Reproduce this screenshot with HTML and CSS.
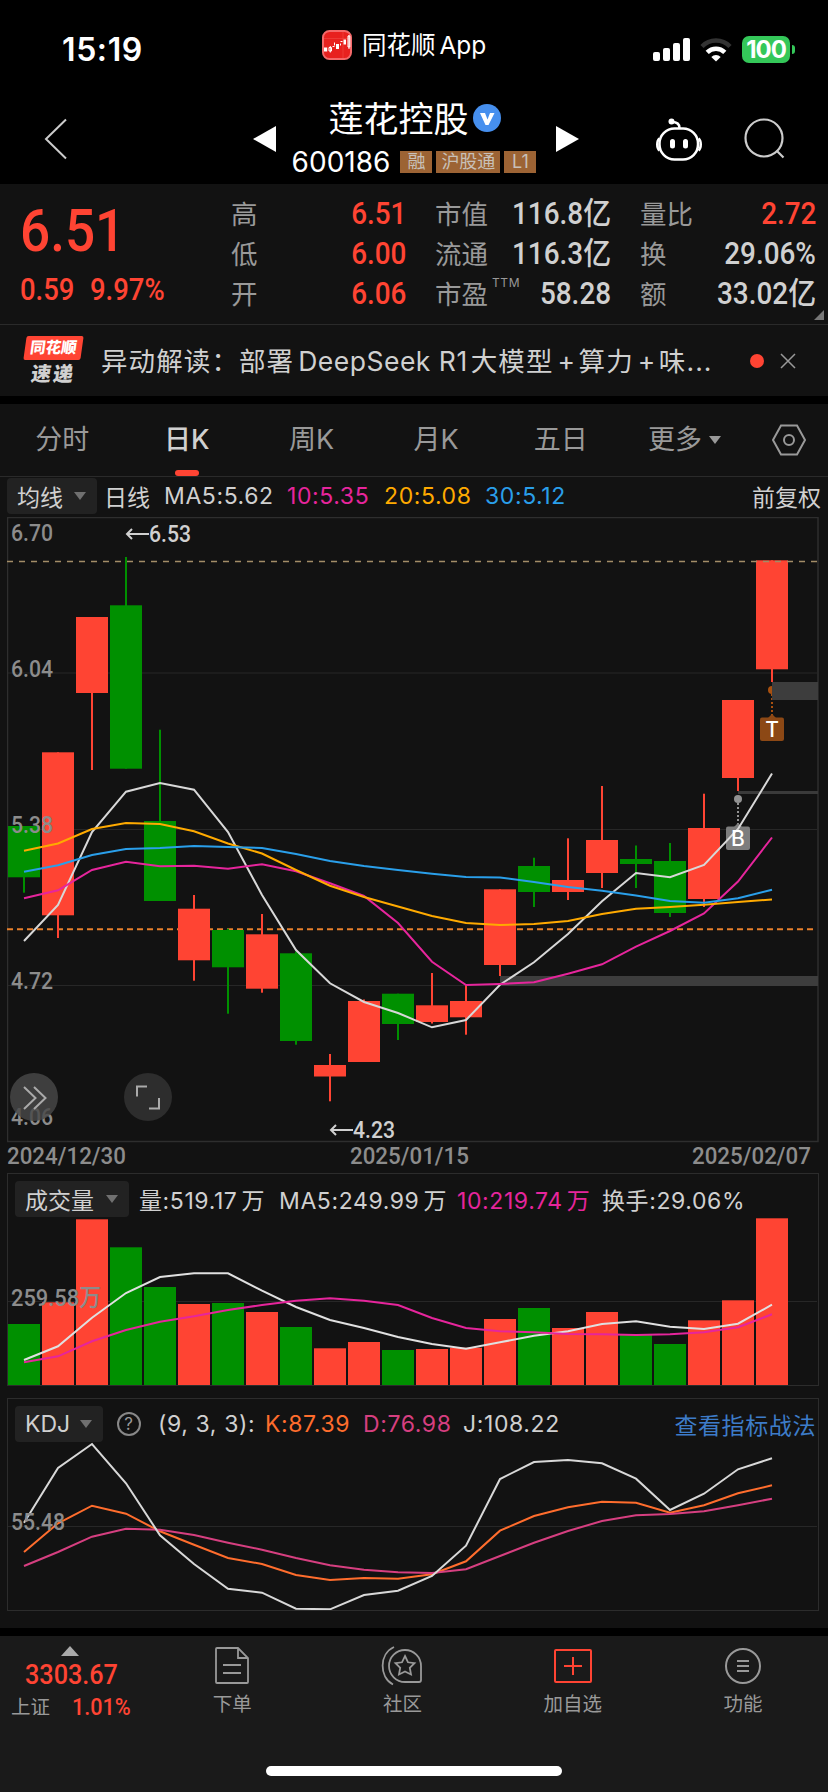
FILE: index.html
```html
<!DOCTYPE html>
<html lang="zh-CN">
<head>
    <meta charset="UTF-8">
    <meta name="viewport" content="width=device-width, initial-scale=1.0">
    <title>莲花控股 600186</title>
    <link rel="stylesheet" href="styles.css">
</head>
<body>
    <div class="status-bar">
        <div class="time">15:19</div>
        <div class="app-name">
            <svg width="30" height="30" viewBox="0 0 30 30">
                <rect x="1" y="1" width="28" height="28" rx="6.5" fill="#e8211f" stroke="#f4696a" stroke-width="2"/>
                <path d="M2 8.500H28M21 2V28" stroke="#f04a45" stroke-width=".6"/>
                <path d="M2 17.500h3.200v4H2zM14 14h3v5h-3zM21.500 9.500h2.500v5h-2.500z" fill="#fff"/>
                <path d="M7 17.500h2.500v3.500H7zM8.300 16v6.500M10.500 16.500h2M12.500 12.500v3M18.500 11.500h2M18.500 13.500v2M26 6h1.800v11H26zM27 5v14" fill="none" stroke="#fff"/>
            </svg>
            <span>同花顺 App</span>
        </div>
        <div class="status-icons">
            <svg width="38" height="24" viewBox="0 0 38 24" fill="#fff">
                <rect x="0" y="14" width="7" height="9" rx="2"/>
                <rect x="10" y="10" width="7" height="13" rx="2"/>
                <rect x="20" y="5" width="7" height="18" rx="2"/>
                <rect x="30" y="0" width="7" height="23" rx="2"/>
            </svg>
            <svg width="32" height="24" viewBox="0 0 32 24" fill="none" stroke-width="4.500">
                <path d="M2 8.500A19.500 19.500 0 0 1 30 8.500" stroke="#333"/>
                <path d="M7.200 14.300A12.500 12.500 0 0 1 24.800 14.300" stroke="#fff"/>
                <path d="M11.300 19A6.800 6.800 0 0 1 20.700 19L16 23.500z" fill="#fff" stroke="none"/>
            </svg>
            <div class="battery">100</div>
            <i class="battery-tip"></i>
        </div>
    </div>

    <div class="header">
        <svg class="back" width="24" height="42" viewBox="0 0 24 42" fill="none" stroke="#ccc" stroke-width="2"><path d="M22 1.500L2 21L22 40.500"/></svg>
        <svg class="prev" width="23" height="26" viewBox="0 0 23 26"><path d="M0 13L23 0V26z" fill="#fff"/></svg>
        <div class="stock">
            <div class="stock-name">
                <span>莲花控股</span>
                <svg width="28" height="28" viewBox="0 0 28 28"><circle cx="14" cy="14" r="14" fill="#468fee"/><path d="M7 9h5l2.500 6.500L17 9h4.500L15.500 21h-3z" fill="#fff"/></svg>
            </div>
            <div class="stock-code">
                <span class="code">600186</span>
                <span class="tag">融</span>
                <span class="tag wide">沪股通</span>
                <span class="tag">L1</span>
            </div>
        </div>
        <svg class="next" width="23" height="26" viewBox="0 0 23 26"><path d="M23 13L0 0V26z" fill="#fff"/></svg>
        <svg class="bot" width="48" height="43" viewBox="0 0 48 43" fill="none" stroke="#fff" stroke-width="2.500">
            <rect x="4.500" y="10.500" width="38.500" height="31" rx="15"/>
            <path d="M4.500 20.500C1.500 23 1.500 30 4.500 32.500M43.500 20.500C46.500 23 46.500 30 43.500 32.500M24.500 10C24.500 6 22 4 17 4"/>
            <circle cx="16.500" cy="3.500" r="3" fill="#fff" stroke="none"/>
            <path d="M17.500 23.500v4.500M30.500 23.500v4.500" stroke-width="5" stroke-linecap="round"/>
        </svg>
        <svg class="search" width="42" height="42" viewBox="0 0 42 42" fill="none" stroke="#ccc" stroke-width="2.200"><circle cx="20" cy="20" r="18.500"/><path d="M32.500 32.500L39.500 39.500"/></svg>
    </div>

    <div class="quote">
        <div class="price">
            <div class="price-now num">6.51</div>
            <div class="price-change"><span class="num">0.59</span><span class="num">9.97%</span></div>
        </div>
        <div class="fields">
            <div><label>高</label><span class="num up">6.51</span></div>
            <div><label>低</label><span class="num up">6.00</span></div>
            <div><label>开</label><span class="num up">6.06</span></div>
        </div>
        <div class="fields">
            <div><label>市值</label><span class="num">116.8亿</span></div>
            <div><label>流通</label><span class="num">116.3亿</span></div>
            <div><label>市盈<sup>TTM</sup></label><span class="num">58.28</span></div>
        </div>
        <div class="fields">
            <div><label>量比</label><span class="num up">2.72</span></div>
            <div><label>换</label><span class="num">29.06%</span></div>
            <div><label>额</label><span class="num">33.02亿</span></div>
        </div>
        <i class="corner"></i>
    </div>

    <div class="news">
        <div class="news-logo">
            <b>同花顺</b>
            <em>速递</em>
        </div>
        <div class="news-text">异动解读：部署<span>DeepSeek R1</span>大模型<span>+</span>算力<span>+</span>味...</div>
        <i class="dot"></i>
        <svg width="16" height="16" viewBox="0 0 16 16" stroke="#999" stroke-width="1.500"><path d="M1 1L15 15M15 1L1 15"/></svg>
    </div>

    <div class="tabs">
        <span>分时</span>
        <span class="active">日K</span>
        <span>周K</span>
        <span>月K</span>
        <span>五日</span>
        <span class="more">更多<i class="arrow"></i></span>
        <svg width="36" height="32" viewBox="0 0 36 32" fill="none" stroke="#999" stroke-width="2"><path d="M10 1.500H26L34 16L26 30.500H10L2 16z"/><circle cx="18" cy="16" r="5"/></svg>
    </div>

    <div class="ma-row">
        <div class="pill">均线<i class="arrow"></i></div>
        <span class="period">日线</span>
        <span>MA5:5.62</span>
        <span class="pink">10:5.35</span>
        <span class="yellow">20:5.08</span>
        <span class="blue">30:5.12</span>
        <span class="adjust">前复权</span>
    </div>

    <svg class="kline" id="kline" width="812" height="626" viewBox="7 517 812 626"></svg>

    <div class="dates"><span class="num">2024/12/30</span><span class="num">2025/01/15</span><span class="num">2025/02/07</span></div>

    <div class="panel">
        <div class="panel-head volume-head">
            <div class="pill">成交量<i class="arrow"></i></div>
            <span>量:519.17<u>万</u></span>
            <span>MA5:249.99<u>万</u></span>
            <span class="pink">10:219.74<u>万</u></span>
            <span>换手:29.06%</span>
        </div>
        <svg id="volume" width="810" height="168" viewBox="8 1217 810 168"></svg>
    </div>

    <div class="panel">
        <div class="panel-head kdj-head">
            <div class="pill">KDJ<i class="arrow"></i></div>
            <i class="help">?</i>
            <span>(9, 3, 3):</span>
            <span class="k">K:87.39</span>
            <span class="d">D:76.98</span>
            <span>J:108.22</span>
            <a class="link">查看指标战法</a>
        </div>
        <svg id="kdj" width="810" height="168" viewBox="8 1442 810 168"></svg>
    </div>

    <div class="footer">
        <div class="index">
            <i class="index-arrow"></i>
            <div class="index-value num">3303.67</div>
            <div class="index-name"><span>上证</span><span class="num">1.01%</span></div>
        </div>
        <div class="nav">
            <svg width="40" height="40" viewBox="0 0 40 40" fill="none" stroke="#999" stroke-width="1.800"><path d="M26 2H5Q4 2 4 3V36Q4 37 5 37H35Q36 37 36 36V12zM26 2V12H36M11 19H29M11 27H29"/></svg>
            <span>下单</span>
        </div>
        <div class="nav">
            <svg width="44" height="40" viewBox="0 0 44 40" fill="none" stroke="#999" stroke-width="1.800"><path d="M14 1C-1 8-1 31 13 38.500M25 4A16 16 0 0 0 25 36H39Q41 36 41 34V20A16 16 0 0 0 25 4z"/><path d="M25 10L28 16.300L34.500 17.200L29.800 21.900L31 28.500L25 25.500L19 28.500L20.200 21.900L15.500 17.200L22 16.300z"/></svg>
            <span>社区</span>
        </div>
        <div class="nav">
            <svg width="40" height="40" viewBox="0 0 40 40" fill="none" stroke="#ff4433" stroke-width="2"><rect x="2" y="4" width="36" height="32" rx="1"/><path d="M11 20H29M20 11V29"/></svg>
            <span>加自选</span>
        </div>
        <div class="nav">
            <svg width="40" height="40" viewBox="0 0 40 40" fill="none" stroke="#999" stroke-width="2"><circle cx="20" cy="20" r="17"/><path d="M14 15H26M14 20H26M14 25H26"/></svg>
            <span>功能</span>
        </div>
        <i class="home-bar"></i>
    </div>

    <script src="chart.js"></script>
</body>
</html>
```

FILE: styles.css
```css
* {
    box-sizing: border-box;
}
body {
    margin: 0;
    width: 828px;
    height: 1792px;
    overflow: hidden;
    background-color: #121212;
    color: #d0d0d0;
    font-family: Inter, 'Noto Sans CJK SC', sans-serif;
}
svg {
    display: block;
    flex: none;
}
i, em {
    font-style: normal;
}
u {
    text-decoration: none;
    margin-left: 4px;
}
.num {
    display: inline-block;
    font-family: Roboto, 'Noto Sans CJK SC', sans-serif;
    font-weight: 500;
    letter-spacing: 0;
    transform: scaleX(0.9);
    transform-origin: right center;
    white-space: nowrap;
}
.up {
    color: #ff4433;
}
.pink {
    color: #e6259c;
}
.yellow {
    color: #ffaa00;
}
.blue {
    color: #2a9fea;
}

/* 状态栏 */
.status-bar {
    display: grid;
    grid-template-columns: 322px 331px 1fr;
    height: 100px;
    background-color: #000;
    color: #fff;
}
.time {
    padding: 30px 0 0 62px;
    font-size: 32px;
    line-height: 39px;
    font-weight: 600;
    letter-spacing: 0.6px;
}
.app-name {
    display: flex;
    align-items: center;
    gap: 10px;
    height: 30px;
    margin-top: 30px;
    font-size: 24.5px;
    white-space: nowrap;
    word-spacing: -3px;
}
.app-name span {
    margin-top: -4px;
}
.status-icons {
    display: flex;
    align-items: center;
    height: 27px;
    margin-top: 36px;
}
.status-icons svg + svg {
    margin: 0 10px 0 9px;
}
.battery {
    width: 48px;
    height: 27px;
    border-radius: 7px;
    background-color: #34c759;
    font-size: 24px;
    line-height: 27px;
    font-weight: 700;
    text-align: center;
    letter-spacing: -1px;
}
.battery-tip {
    width: 3px;
    height: 9px;
    margin-left: 2px;
    border-radius: 0 4px 4px 0;
    background-color: #34c759;
}

/* 标题 */
.header {
    display: flex;
    height: 84px;
    background-color: #000;
}
.back {
    margin: 18px 0 0 44px;
}
.prev {
    margin: 26px 0 0 185px;
}
.stock {
    width: 280px;
    padding-right: 4px;
    text-align: center;
}
.stock-name {
    display: flex;
    justify-content: center;
    align-items: center;
    gap: 4px;
    height: 36px;
    padding-left: 1px;
    color: #fff;
    font-size: 35px;
}
.stock-name span {
    margin-top: -3px;
}
.stock-code {
    display: flex;
    justify-content: center;
    align-items: center;
    gap: 4px;
    height: 52px;
}
.code {
    margin-right: 6px;
    color: #fff;
    font-size: 28px;
}
.tag {
    width: 32px;
    height: 22px;
    background-color: #9c6334;
    color: #c8c0b8;
    font-size: 18px;
    line-height: 21px;
}
.tag.wide {
    width: 64px;
}
.next {
    margin-top: 26px;
}
.bot {
    margin: 18px 0 0 76px;
}
.search {
    margin: 18px 0 0 41px;
}

/* 行情 */
.quote {
    display: grid;
    grid-template-columns: 180px 175px 176px 176px;
    gap: 0 29px;
    position: relative;
    height: 141px;
    padding-left: 22px;
    border-bottom: 1px solid #2a2a2a;
}
.price {
    margin-left: -2px;
    color: #ff4433;
}
.price .num {
    transform-origin: left center;
}
.price-now {
    margin-top: 14px;
    font-size: 59px;
    line-height: 66px;
}
.price-change {
    display: flex;
    gap: 10px;
    margin-top: 8px;
    font-size: 30.5px;
    line-height: 36px;
}
.fields {
    padding-top: 11px;
}
.fields div {
    display: flex;
    justify-content: space-between;
    height: 40px;
    line-height: 38px;
}
.fields label {
    color: #999;
    font-size: 26.5px;
    white-space: nowrap;
}
.fields .num {
    font-size: 31px;
    line-height: 38px;
}
sup {
    margin-left: 4px;
    font-size: 12px;
    line-height: 0;
    letter-spacing: 0.6px;
    vertical-align: 17px;
}
.corner {
    position: absolute;
    right: 4px;
    bottom: 4px;
    border-bottom: 10px solid #777;
    border-left: 10px solid transparent;
}

/* 速递 */
.news {
    display: flex;
    align-items: center;
    height: 79px;
    padding-left: 25px;
    border-bottom: 8px solid #000;
}
.news-logo {
    width: 76px;
}
.news-logo b, .news-logo em {
    display: block;
    width: 57px;
    transform: skewX(-8deg);
    text-align: center;
    font-weight: 900;
}
.news-logo b {
    height: 24px;
    border-radius: 2px;
    background-color: #ff4433;
    color: #fff;
    font-size: 15.5px;
    line-height: 23px;
}
.news-logo em {
    height: 25px;
    font-size: 20px;
    line-height: 28px;
    letter-spacing: 2px;
}
.news-text {
    width: 649px;
    margin-top: -3px;
    font-size: 26.5px;
    letter-spacing: 1.1px;
    white-space: nowrap;
}
.news-text span {
    padding: 0 3px 0 4px;
    letter-spacing: 0.5px;
}
.dot {
    width: 14px;
    height: 14px;
    margin-right: 16px;
    border-radius: 50%;
    background-color: #ff4433;
}

/* 周期切换 */
.tabs {
    display: flex;
    align-items: center;
    height: 73px;
    border-bottom: 1px solid #2a2a2a;
    color: #999;
    font-size: 27px;
}
.tabs span {
    width: 124.6px;
    height: 72px;
    line-height: 72px;
    text-align: center;
}
.tabs .active {
    position: relative;
    color: #d0d0d0;
    font-weight: 500;
}
.tabs .active::after {
    content: '';
    position: absolute;
    left: 50px;
    bottom: 0;
    width: 24px;
    height: 6px;
    border-radius: 3px;
    background-color: #ff4433;
}
.tabs .more {
    width: 148px;
    padding-left: 25px;
    text-align: left;
}
.arrow {
    display: inline-block;
    border-top: 8px solid #707070;
    border-left: 6px solid transparent;
    border-right: 6px solid transparent;
}
.more .arrow {
    margin-left: 7px;
    vertical-align: 5px;
    border-top-color: #999;
}

/* 均线 */
.ma-row {
    display: grid;
    grid-template-columns: 97px 60px 123px 97px 101px 100px 1fr;
    align-items: center;
    height: 40px;
    padding: 0 7px 2px 7px;
    font-size: 23px;
    letter-spacing: 0.6px;
    white-space: nowrap;
}
.period, .adjust {
    letter-spacing: 0;
}
.pill {
    display: flex;
    align-items: center;
    justify-content: space-between;
    width: 90px;
    height: 36px;
    padding: 0 11px 0 10px;
    border-radius: 4px;
    background-color: #222;
    letter-spacing: 0;
}
.adjust {
    text-align: right;
}
.kline {
    margin-left: 7px;
}
.dates {
    display: flex;
    justify-content: space-between;
    height: 30px;
    padding: 0 19px 0 7px;
    color: #8c8c8c;
    font-size: 24px;
    line-height: 27px;
}
.dates .num {
    width: 117px;
    transform: scaleX(0.93);
    transform-origin: left center;
}

/* 副图 */
.panel {
    width: 812px;
    height: 213px;
    margin: 0 0 12px 7px;
    border: 1px solid #2c2c2c;
}
.panel-head {
    display: grid;
    align-items: center;
    height: 43px;
    padding: 7px 2px 0 7px;
    font-size: 23px;
    letter-spacing: 0.6px;
    white-space: nowrap;
}
.volume-head {
    grid-template-columns: 124px 140px 178px 145px 1fr;
}
.kdj-head {
    grid-template-columns: 102px 41px 107px 98px 100px 110px 1fr;
}
.volume-head .pill {
    width: 114px;
}
.kdj-head .pill {
    width: 88px;
}
.help {
    width: 24px;
    height: 24px;
    border: 2px solid #888;
    border-radius: 50%;
    color: #999;
    font-size: 17px;
    line-height: 20px;
    text-align: center;
}
.k {
    color: #ff6d2d;
}
.d {
    color: #d63f80;
}
.link {
    color: #3d7cc9;
    text-align: right;
}

/* 图表 */
.grid {
    stroke: #272727;
    fill: none;
}
.line {
    fill: none;
    stroke-width: 2;
}
.axis {
    fill: #8c8c8c;
    font: 500 24px Roboto, 'Noto Sans CJK SC', sans-serif;
}
.mark {
    fill: #d0d0d0;
    font: 500 24px Roboto, sans-serif;
}
.badge-text {
    fill: #fff;
    font: 500 21px Inter, sans-serif;
    text-anchor: middle;
}

/* 底部 */
.footer {
    display: grid;
    grid-template-columns: 147px repeat(4, 170.3px);
    position: relative;
    height: 164px;
    margin-top: 17px;
    border-top: 8px solid #000;
    background-color: #1a1a1a;
    color: #999;
}
.index-arrow {
    display: block;
    width: 0;
    margin: 10px 0 0 61px;
    border-bottom: 10px solid #aaa;
    border-left: 9px solid transparent;
    border-right: 9px solid transparent;
}
.index .num {
    color: #ff4433;
    transform-origin: left center;
}
.index-value {
    margin-left: 25px;
    font-size: 28px;
    line-height: 38px;
}
.index-name {
    display: flex;
    align-items: center;
    gap: 22px;
    padding-left: 11px;
    font-size: 19.5px;
    line-height: 26px;
}
.index-name .num {
    font-size: 24px;
}
.nav {
    display: flex;
    flex-direction: column;
    align-items: center;
    padding-top: 10px;
    font-size: 19.5px;
}
.nav span {
    line-height: 36px;
}
.home-bar {
    position: absolute;
    left: 266px;
    bottom: 16px;
    width: 296px;
    height: 10px;
    border-radius: 5px;
    background-color: #fff;
}
```

FILE: chart.js
```js
const RED = '#ff4433';
const GREEN = '#009000';

// [颜色, 最高, 实体上沿, 实体下沿, 最低, 成交量上沿]
const candles = [
    ['g', 826, 826, 877.3, 892.7, 1324],
    ['r', 752.3, 752.3, 915.3, 938, 1302.3],
    ['r', 617, 617, 693, 770, 1219.3],
    ['g', 557, 605.3, 768.7, 768.7, 1247.3],
    ['g', 729.7, 821, 901, 901, 1287],
    ['r', 895, 908.7, 960.3, 980.7, 1304],
    ['g', 928.7, 930, 967.3, 1013.7, 1303],
    ['r', 914, 934.3, 988.7, 992.7, 1312],
    ['g', 951.5, 953.3, 1041, 1044.7, 1327],
    ['r', 1054, 1065, 1076.5, 1101.3, 1348.3],
    ['r', 999.5, 1001, 1062, 1062, 1342],
    ['g', 993.7, 993.7, 1024, 1040, 1350],
    ['r', 973, 1005.3, 1022, 1023.5, 1349],
    ['r', 985, 1001, 1017.3, 1034.7, 1347.7],
    ['r', 889.3, 889.3, 965, 976, 1319],
    ['g', 857.7, 866, 892, 907, 1308],
    ['r', 838.3, 880, 892, 900, 1328],
    ['r', 786, 840, 873, 888, 1312],
    ['g', 845.5, 859, 864, 888, 1335],
    ['g', 843, 861, 913, 917, 1344],
    ['r', 793.7, 828, 899, 907, 1320.3],
    ['r', 700, 700, 778, 791, 1300.3],
    ['r', 560.3, 560.3, 669.3, 682, 1218.3]
];

const ma5 = [941, 905, 832, 791.7, 783, 789.7, 832, 895, 950, 983.3, 1002, 1013, 1027.3, 1020, 984.7, 962.3, 934, 901.3, 873, 877.3, 865, 829, 773.5];
const ma10 = [898.3, 890.3, 870, 861.7, 866.3, 865.7, 868.7, 864.3, 871.3, 883.3, 896, 923, 961.7, 985, 984, 982.3, 973.7, 964.3, 946.7, 931, 913.5, 881.5, 837.5];
const ma20 = [850.7, 843.5, 829, 823, 824, 831.3, 843.5, 853.5, 870, 885.7, 897, 906.5, 916, 923, 925, 924, 921, 914, 908.7, 907, 904.7, 902, 899.5];
const ma30 = [871.7, 865.3, 855, 849, 848, 846, 847, 848, 854, 861, 866, 870, 873.7, 877, 877.5, 882, 887, 890.7, 895.5, 901, 902.7, 898.3, 889.7];
const vol5 = [1360, 1346.3, 1317.7, 1293, 1277, 1273.3, 1273.3, 1290.7, 1307, 1320, 1328, 1337, 1344, 1348.7, 1342.3, 1335.7, 1331.3, 1324, 1321.3, 1326.7, 1329, 1323.7, 1304.7];
const vol10 = [1362.3, 1356.3, 1341.3, 1330, 1321.7, 1316.3, 1310, 1305, 1300.7, 1298.3, 1300.7, 1305, 1318, 1328, 1331.3, 1332.3, 1334, 1334.3, 1335, 1334.3, 1332.3, 1327.3, 1314.3];
const lineK = [1552, 1523.3, 1505.7, 1513.7, 1531.3, 1544.7, 1558, 1564, 1575, 1580, 1578, 1578.7, 1574.3, 1561.3, 1530.7, 1516, 1507.3, 1501.7, 1502.7, 1512.7, 1505.3, 1493.3, 1485.3];
const lineD = [1566, 1552, 1536.7, 1528.7, 1529.7, 1535, 1542.7, 1549.7, 1558, 1565.3, 1569.7, 1572.3, 1573, 1569.3, 1556, 1542.7, 1531, 1521, 1515.3, 1514, 1511.3, 1505.3, 1498.7];
const lineJ = [1522.7, 1468, 1444, 1483.3, 1535.3, 1564, 1588.7, 1592.7, 1608.7, 1609.3, 1595, 1590.7, 1576, 1545.7, 1479, 1462, 1460, 1463.3, 1478.7, 1510, 1493.7, 1469.3, 1458.3];

function line(values, color) {
    const points = values.map((y, i) => (24 + 34 * i) + ',' + y).join(' ');
    return `<polyline class="line" stroke="${color}" points="${points}"/>`;
}

function rect(x, y, w, h, color) {
    return `<rect x="${x}" y="${y}" width="${w}" height="${h}" fill="${color}"/>`;
}

function text(x, y, w, value, cls) {
    return `<text class="${cls}" x="${x}" y="${y}" textLength="${w}" lengthAdjust="spacingAndGlyphs">${value}</text>`;
}

function drawKline() {
    let s = '<path class="grid" d="M8 673H817M8 829.5H817M8 985.5H817"/>';
    s += '<rect x="7.5" y="517.5" width="810.5" height="624" fill="none" stroke="#2e2e2e" stroke-width="1.5"/>';
    s += '<path d="M7 929.3H817" stroke="#e8802c" stroke-width="2" stroke-dasharray="6 4"/>';
    candles.forEach((c, i) => {
        const color = c[0] === 'r' ? RED : GREEN;
        s += rect(23 + 34 * i, c[1], 2, c[4] - c[1], color);
        s += rect(8 + 34 * i, c[2], 32, c[3] - c[2], color);
    });
    s += '<path d="M7 561.5H817" stroke="#a38d67" stroke-width="1.5" stroke-dasharray="6 6"/>';
    // B / T 标记
    s += '<circle cx="772" cy="690" r="4" fill="#a8500f"/><path d="M772 694V716" stroke="#a8500f" stroke-width="2" stroke-dasharray="2 2"/>';
    s += '<circle cx="738" cy="799" r="4" fill="#929292"/><path d="M738 803V826" stroke="#929292" stroke-width="2" stroke-dasharray="2 2"/>';
    s += rect(772, 682, 46, 18, '#3d3d3d') + rect(738, 791, 80, 3, '#3a3a3a') + rect(500, 976, 318, 10, '#3d3d3d');
    s += '<path d="M768 718L772 714L776 718z" fill="#8c4815"/><rect x="760" y="717.5" width="24" height="23.5" rx="2" fill="#8c4815"/>';
    s += '<path d="M734 827L738 823L742 827z" fill="#7d7d7d"/><rect x="726" y="826.5" width="24" height="23.5" rx="2" fill="#7d7d7d"/>';
    s += line(ma5, '#d8d8d8') + line(ma10, '#e6259c') + line(ma20, '#ffaa00') + line(ma30, '#2a9fea');
    s += '<text class="badge-text" x="772" y="737">T</text><text class="badge-text" x="738" y="846">B</text>';
    s += text(11, 541, 42, '6.70', 'axis') + text(11, 677, 42, '6.04', 'axis') + text(11, 833, 42, '5.38', 'axis');
    s += text(11, 989, 42, '4.72', 'axis') + text(11, 1125, 42, '4.06', 'axis');
    s += text(149, 542, 42, '6.53', 'mark') + text(353, 1138, 42, '4.23', 'mark');
    s += '<path d="M149 534H127M132 529L127 534L132 539M353 1130H331M336 1125L331 1130L336 1135" fill="none" stroke="#d0d0d0" stroke-width="2"/>';
    // 悬浮按钮
    s += '<circle cx="34" cy="1097" r="24" fill="#484848" opacity=".82"/><path d="M24 1087L35.5 1098L24 1109M34 1087L45.5 1098L34 1109" fill="none" stroke="#aaa" stroke-width="2"/>';
    s += '<circle cx="148" cy="1097" r="24" fill="#2d2d2d"/><path d="M137 1096.5V1086.5H147M149 1108.5H159V1098" fill="none" stroke="#aaa" stroke-width="2"/>';
    document.getElementById('kline').innerHTML = s;
}

function drawVolume() {
    let s = '<path class="grid" d="M8 1301.5H817"/>';
    candles.forEach((c, i) => {
        s += rect(8 + 34 * i, c[5], 32, 1385 - c[5], c[0] === 'r' ? RED : GREEN);
    });
    s += line(vol5, '#e0e0e0') + line(vol10, '#e6259c') + text(11, 1306, 90, '259.58万', 'axis');
    document.getElementById('volume').innerHTML = s;
}

function drawKdj() {
    let s = '<path class="grid" d="M8 1526.5H817"/>';
    s += line(lineK, '#ff6d2d') + line(lineD, '#d63f80') + line(lineJ, '#d8d8d8') + text(11, 1530, 54, '55.48', 'axis');
    document.getElementById('kdj').innerHTML = s;
}

drawKline();
drawVolume();
drawKdj();
```
